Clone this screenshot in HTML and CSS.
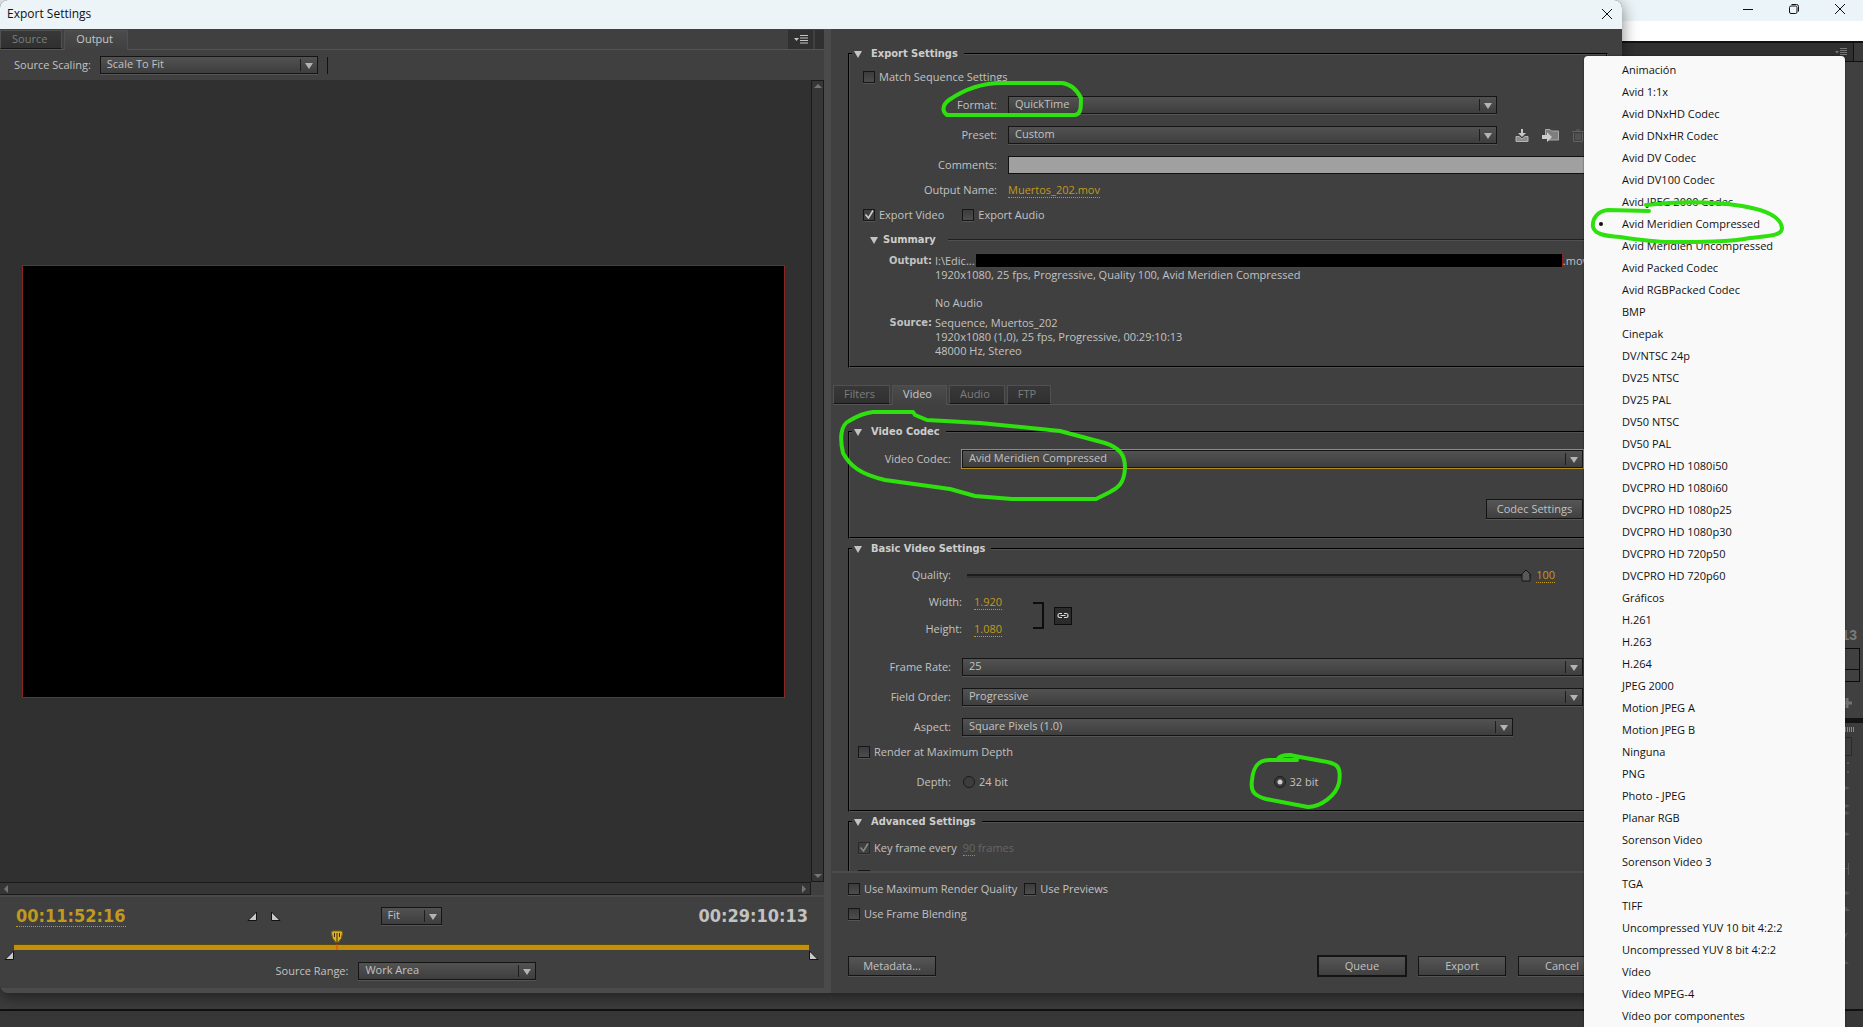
FILE: index.html
```
<!DOCTYPE html>
<html lang="en">
	<head>
	<meta charset="utf-8">
	<title>Export Settings</title>
	<link rel="stylesheet" href="styles.css">
	</head>
	<body>
		<div class="desktop">

			<!-- main application window, behind the dialog -->
			<div class="app">
				<div class="app_titlebar">
					<button class="win_button" aria-label="Minimize"><svg width="10" height="10" viewBox="0 0 10 10"><path d="M0 5.5H10"/></svg></button>
					<button class="win_button" aria-label="Restore"><svg width="10" height="10" viewBox="0 0 10 10"><rect x="0.5" y="2" width="7.5" height="7.5" rx="1.5"/><path d="M2.5 0.5H7.5Q9.5 0.5 9.5 2.5V7.5"/></svg></button>
					<button class="win_button" aria-label="Close"><svg width="10" height="10" viewBox="0 0 10 10"><path d="M0 0L10 10M10 0L0 10"/></svg></button>
				</div>
				<div class="app_menubar"></div>
				<div class="app_tabs">
					<svg width="12" height="8" viewBox="0 0 12 8"><path d="M0 3H4L2 5.5Z" fill="#777"/><path d="M5 .5H12M5 2.5H12M5 4.5H12M5 6.5H12" stroke="#777"/></svg>
					<span class="app_grip"></span>
				</div>
				<div class="app_program">
					<span class="app_time">13</span>
					<div class="app_ruler"></div>
					<svg class="app_plus" width="14" height="10" viewBox="0 0 14 10"><path d="M7 0V10M2 5H12" stroke="#727272" stroke-width="3"/></svg>
				</div>
				<div class="app_tools">
					<div class="app_dots"></div>
					<div class="app_tool"></div>
					<svg width="16" height="210" viewBox="0 0 16 210" fill="#585858"><path d="M8 4h2v2h-2zM12 2h2v2h-2zM8 9h2v2h-2zM12 11h2v2h-2zM8 25l7 3-7 3zM8 43l7 3-7 3zM8 50l7 3-7 3zM8 71l7 3-7 3zM8 108h5v-5h1v12h-1v-6H8zM8 130l7 3-7 3zM9 145l6 6H9zM13 172l-4 9v-6zM8 198l6 6H8z"/></svg>
				</div>
				<div class="app_bottom"></div>
			</div>

			<div class="dialog">
				<div class="dialog_title">
					<span>Export Settings</span>
					<button class="win_button" aria-label="Close"><svg width="10" height="10" viewBox="0 0 10 10"><path d="M0 0L10 10M10 0L0 10"/></svg></button>
				</div>

				<div class="dialog_body">
					<section class="preview">
						<div class="tabs preview_tabs">
							<button class="tab">Source</button>
							<button class="tab active">Output</button>
							<button class="panel_menu" aria-label="Panel menu"><svg width="14" height="9" viewBox="0 0 14 9"><path d="M0 3H5L2.500 6Z" fill="#c4c4c4"/><path d="M6 .5H14M6 3H14M6 5.500H14M6 8H14" stroke="#c4c4c4"/></svg></button>
							<span class="tab_stub"></span>
						</div>
						<div class="scaling">
							<label for="scaling">Source Scaling:</label>
							<span class="dropdown"><select id="scaling"><option>Scale To Fit</option></select></span>
							<span class="scaling_line"></span>
						</div>
						<div class="viewport">
							<div class="stage"><div class="frame"></div></div>
							<div class="vbar"><span class="arrow up"></span><span class="arrow down"></span></div>
						</div>
						<div class="hbar"><span class="arrow left"></span><span class="arrow right"></span></div>
						<div class="transport">
							<div class="transport_row">
								<button class="timecode">00:11:52:16</button>
								<button class="marker first" aria-label="Set In Point"><svg width="10" height="10" viewBox="0 0 10 10"><path d="M1 9.500H9.500V1Z"/></svg></button>
								<button class="marker" aria-label="Set Out Point"><svg width="10" height="10" viewBox="0 0 10 10"><path d="M.5 1V9.500H9Z"/></svg></button>
								<span class="dropdown fit"><select aria-label="Zoom"><option>Fit</option></select></span>
								<span class="duration">00:29:10:13</span>
							</div>
							<div class="timeline">
								<svg width="10" height="10" viewBox="0 0 10 10"><path d="M1 9.500H9.500V1Z"/></svg>
								<input type="range" class="playbar" min="0" max="1750" value="708" aria-label="Playhead">
								<svg width="10" height="10" viewBox="0 0 10 10"><path d="M.5 1V9.500H9Z"/></svg>
							</div>
							<div class="source_range">
								<label for="range">Source Range:</label>
								<span class="dropdown"><select id="range"><option>Work Area</option></select></span>
							</div>
						</div>
					</section>

					<section class="settings">
						<fieldset class="group export">
							<legend><span class="twirl"></span>Export Settings</legend>
							<div class="row"><label class="check"><input type="checkbox">Match Sequence Settings</label></div>
							<div class="row near">
								<label class="name" for="format">Format:</label>
								<span class="dropdown"><select id="format"><option>QuickTime</option></select></span>
								<span class="preset_icons"></span>
							</div>
							<div class="row">
								<label class="name" for="preset">Preset:</label>
								<span class="dropdown"><select id="preset"><option>Custom</option></select></span>
								<span class="preset_icons">
									<button aria-label="Save Preset"><svg width="14" height="13" viewBox="0 0 14 13"><path d="M1 7.500H4L7 10L10 7.500H13V12.500H1Z" fill="#8b8b8b" stroke="#b4b4b4"/><path d="M6 0H8V4H11L7 8L3 4H6Z" fill="#c6c6c6"/></svg></button>
									<button aria-label="Import Preset"><svg width="17" height="14" viewBox="0 0 17 14"><path d="M3.500 9V1.500H8L9.500 3H16.500V12H6" fill="#7e7e7e" stroke="#a8a8a8"/><path d="M0 7H5V4L10 9L5 14V11H0Z" fill="#cdcdcd"/></svg></button>
									<button aria-label="Delete Preset" disabled><svg width="12" height="13" viewBox="0 0 12 13"><path d="M0 2.500H12M4 1H8M1.500 4V12.500H10.500V4M4 4.500V11M6 4.500V11M8 4.500V11" fill="none" stroke="#626262"/></svg></button>
								</span>
							</div>
							<div class="row">
								<label class="name" for="comments">Comments:</label>
								<input type="text" id="comments">
							</div>
							<div class="row tight">
								<span class="name">Output Name:</span>
								<a class="hot" href="#">Muertos_202.mov</a>
							</div>
							<div class="row tight">
								<label class="check"><input type="checkbox" checked>Export Video</label>
								<label class="check second"><input type="checkbox">Export Audio</label>
							</div>
							<div class="summary_head"><span class="twirl"></span><h3>Summary</h3></div>
							<dl class="summary">
								<dt>Output:</dt>
								<dd><div class="path"><span>I:\Edic...</span><span class="path_hidden"></span><span>.mov</span></div>1920x1080, 25 fps, Progressive, Quality 100, Avid Meridien Compressed<br><br></dd>
								<dt></dt>
								<dd class="no_audio">No Audio</dd>
								<dt>Source:</dt>
								<dd>Sequence, Muertos_202<br>1920x1080 (1,0), 25 fps, Progressive, 00:29:10:13<br>48000 Hz, Stereo</dd>
							</dl>
						</fieldset>

						<div class="tabs">
							<button class="tab">Filters</button>
							<button class="tab active">Video</button>
							<button class="tab">Audio</button>
							<button class="tab">FTP</button>
						</div>
						<div class="tab_page">
							<fieldset class="group codec">
								<legend><span class="twirl"></span>Video Codec</legend>
								<div class="row">
									<label class="name" for="codec">Video Codec:</label>
									<span class="dropdown focused"><select id="codec"><option>Avid Meridien Compressed</option></select></span>
								</div>
								<button class="button codec_button">Codec Settings</button>
							</fieldset>

							<fieldset class="group basic">
								<legend><span class="twirl"></span>Basic Video Settings</legend>
								<div class="row quality">
									<label class="name" for="quality">Quality:</label>
									<input type="range" id="quality" min="0" max="100" value="100">
									<button class="hot">100</button>
								</div>
								<div class="size">
									<div>
										<div class="row"><span class="name">Width:</span><button class="hot">1.920</button></div>
										<div class="row"><span class="name">Height:</span><button class="hot">1.080</button></div>
									</div>
									<span class="bracket"></span>
									<button class="link" aria-label="Constrain proportions"><svg width="12" height="7" viewBox="0 0 12 7"><path d="M5 1.500H2.500Q1 1.500 1 3.500T2.500 5.500H5M7 1.500H9.500Q11 1.500 11 3.500T9.500 5.500H7M3.500 3.500H8.500" fill="none" stroke="#d8d8d8" stroke-width="1.200"/></svg></button>
								</div>
								<div class="row apart">
									<label class="name" for="rate">Frame Rate:</label>
									<span class="dropdown"><select id="rate"><option>25</option></select></span>
								</div>
								<div class="row">
									<label class="name" for="order">Field Order:</label>
									<span class="dropdown"><select id="order"><option>Progressive</option></select></span>
								</div>
								<div class="row aspect">
									<label class="name" for="aspect">Aspect:</label>
									<span class="dropdown"><select id="aspect"><option>Square Pixels (1.0)</option></select></span>
								</div>
								<div class="row tight"><label class="check"><input type="checkbox">Render at Maximum Depth</label></div>
								<div class="row depth">
									<span class="name">Depth:</span>
									<label class="check"><input type="radio" name="depth">24 bit</label>
									<label class="check"><input type="radio" name="depth" checked>32 bit</label>
								</div>
							</fieldset>

							<fieldset class="group advanced">
								<legend><span class="twirl"></span>Advanced Settings</legend>
								<div class="row">
									<label class="check"><input type="checkbox" checked disabled>Key frame every</label>
									<span class="disabled"><span class="hot">90</span> frames</span>
								</div>
								<div class="row near"><label class="check"><input type="checkbox">Optimize Stills</label></div>
							</fieldset>
						</div>

						<div class="footer">
							<div class="row">
								<label class="check"><input type="checkbox">Use Maximum Render Quality</label>
								<label class="check previews"><input type="checkbox">Use Previews</label>
							</div>
							<div class="row tight"><label class="check"><input type="checkbox">Use Frame Blending</label></div>
							<div class="buttons">
								<button class="button">Metadata...</button>
								<button class="button default">Queue</button>
								<button class="button">Export</button>
								<button class="button">Cancel</button>
							</div>
						</div>
					</section>
				</div>
			</div>

			<ul class="codec_menu" role="menu">
				<li role="menuitem">Animación</li>
				<li role="menuitem">Avid 1:1x</li>
				<li role="menuitem">Avid DNxHD Codec</li>
				<li role="menuitem">Avid DNxHR Codec</li>
				<li role="menuitem">Avid DV Codec</li>
				<li role="menuitem">Avid DV100 Codec</li>
				<li role="menuitem">Avid JPEG 2000 Codec</li>
				<li role="menuitem" class="selected">Avid Meridien Compressed</li>
				<li role="menuitem">Avid Meridien Uncompressed</li>
				<li role="menuitem">Avid Packed Codec</li>
				<li role="menuitem">Avid RGBPacked Codec</li>
				<li role="menuitem">BMP</li>
				<li role="menuitem">Cinepak</li>
				<li role="menuitem">DV/NTSC 24p</li>
				<li role="menuitem">DV25 NTSC</li>
				<li role="menuitem">DV25 PAL</li>
				<li role="menuitem">DV50 NTSC</li>
				<li role="menuitem">DV50 PAL</li>
				<li role="menuitem">DVCPRO HD 1080i50</li>
				<li role="menuitem">DVCPRO HD 1080i60</li>
				<li role="menuitem">DVCPRO HD 1080p25</li>
				<li role="menuitem">DVCPRO HD 1080p30</li>
				<li role="menuitem">DVCPRO HD 720p50</li>
				<li role="menuitem">DVCPRO HD 720p60</li>
				<li role="menuitem">Gráficos</li>
				<li role="menuitem">H.261</li>
				<li role="menuitem">H.263</li>
				<li role="menuitem">H.264</li>
				<li role="menuitem">JPEG 2000</li>
				<li role="menuitem">Motion JPEG A</li>
				<li role="menuitem">Motion JPEG B</li>
				<li role="menuitem">Ninguna</li>
				<li role="menuitem">PNG</li>
				<li role="menuitem">Photo - JPEG</li>
				<li role="menuitem">Planar RGB</li>
				<li role="menuitem">Sorenson Video</li>
				<li role="menuitem">Sorenson Video 3</li>
				<li role="menuitem">TGA</li>
				<li role="menuitem">TIFF</li>
				<li role="menuitem">Uncompressed YUV 10 bit 4:2:2</li>
				<li role="menuitem">Uncompressed YUV 8 bit 4:2:2</li>
				<li role="menuitem">Vídeo</li>
				<li role="menuitem">Vídeo MPEG-4</li>
				<li role="menuitem">Vídeo por componentes</li>
			</ul>

			<!-- hand drawn marks -->
			<svg class="marks">
				<path d="M1062 83H1002C980 83 962 91 949 100C942 105 942 112 947 115H1075C1081 114 1081 108 1081 98C1077 90 1070 84 1062 83Z"/>
				<path d="M1649 211L1608 210C1598 211 1592 218 1593 227C1595 234 1604 236 1620 237C1640 240 1655 242 1670 242C1700 242 1730 242 1750 238C1768 236 1782 236 1782 228C1781 217 1766 210 1742 206C1715 202 1680 201 1646 205"/>
				<path d="M873 412H913L915 415L927 420L980 423L1060 431L1105 443C1120 448 1125 455 1125 468C1124 485 1117 488 1110 492L1096 499H1012L975 496L950 489L885 480C860 474 850 466 843 453C840 440 840 425 849 421Q862 413 873 412Z"/>
				<path d="M1297 760H1269C1256 760 1253 770 1252 780C1250 793 1256 796 1266 799L1308 807C1320 807 1336 796 1339 783C1342 765 1336 763 1322 761L1300 757L1290 755Q1280 755 1278 759"/>
			</svg>
		</div>
	</body>
</html>
```
FILE: styles.css
```
	html, body {
		margin: 0px;
		width: 100%;
		height: 100%;
		overflow: hidden;
	}

	body, button, input, select {
		font-family: "Open Sans", "Noto Sans", sans-serif;
		font-size: 11px;
		line-height: 14px;
		color: #c2c2c2;
	}

	button, input, select {
		appearance: none;
		border: none;
		border-radius: 0;
		background: none;
		margin: 0;
		padding: 0;
		outline: none;
	}

	svg {
		display: block;
		flex: none;
	}

	.desktop {
		position: relative;
		height: 100%;
		overflow: hidden;
		background: #373737;
	}

	/* window behind */

	.app {
		height: 100%;
		display: flex;
		flex-direction: column;
	}

	.win_button {
		width: 46px;
		display: flex;
		align-items: center;
		justify-content: center;
	}

	.win_button svg {
		fill: none;
		stroke: #111;
	}

	.app_titlebar {
		height: 21px;
		background: #ebf4f8;
		display: flex;
		justify-content: flex-end;
		align-items: flex-start;
	}

	.app_titlebar .win_button {
		height: 17px;
	}

	.app_menubar {
		height: 20px;
		background: #fff;
		border-bottom: 2px solid #111;
	}

	.app_tabs {
		height: 18px;
		display: flex;
		align-items: center;
		justify-content: flex-end;
		gap: 6px;
		background: #303030;
		border-bottom: 1px solid #111;
	}

	.app_grip {
		width: 9px;
		height: 18px;
		border-left: 1px solid #111;
		background: #3a3a3a;
	}

	.app_program {
		flex: 1;
		display: flex;
		flex-direction: column;
		justify-content: flex-end;
		align-items: flex-end;
		background: #404040;
		padding-bottom: 10px;
	}

	.app_time {
		font-family: "Liberation Sans", sans-serif;
		font-size: 14px;
		font-weight: bold;
		color: #7a7a7a;
		padding-right: 6px;
	}

	.app_ruler {
		width: 60px;
		height: 32px;
		margin: 6px 3px 16px 0;
		border: 1px solid #0c0c0c;
		background: linear-gradient(#0c0c0c, #0c0c0c) 0 20px / 100% 1px no-repeat;
	}

	.app_plus {
		margin-right: 9px;
	}

	.app_tools {
		height: 286px;
		display: flex;
		flex-direction: column;
		align-items: flex-end;
		background: #3d3d3d;
		border-top: 5px solid #141414;
	}

	.app_tools svg {
		margin-right: 12px;
	}

	.app_dots {
		width: 20px;
		height: 5px;
		margin: 4px 8px 0 0;
		background: repeating-linear-gradient(90deg, #888 0px, #888 1px, transparent 1px, transparent 2px);
	}

	.app_tool {
		width: 24px;
		height: 17px;
		margin: 5px 11px 4px 0;
		border: 1px solid #2b2b2b;
	}

	.app_bottom {
		height: 16px;
		border-top: 2px solid #111;
		background: #373737;
	}

	/* export dialog */

	.dialog {
		position: absolute;
		left: 0;
		top: 0;
		right: 241px;
		bottom: 34px;
		display: flex;
		flex-direction: column;
		background: #404040;
		border-radius: 8px;
		box-shadow: 0 4px 16px rgba(0,0,0,.5);
		overflow: hidden;
	}

	.dialog_title {
		height: 28px;
		flex: none;
		display: flex;
		justify-content: space-between;
		align-items: center;
		padding: 0 0 1px 7px;
		background: #ecf4f8;
		color: #111;
		font-size: 12px;
	}

	.dialog_title .win_button {
		width: 30px;
		height: 26px;
	}

	.dialog_body {
		flex: 1;
		min-height: 0;
		display: flex;
	}

	.preview {
		flex: 824;
		min-width: 0;
		display: flex;
		flex-direction: column;
	}

	.settings {
		flex: 774;
		min-width: 0;
		display: flex;
		flex-direction: column;
		padding: 18px 0 0 17px;
		border-left: 7px solid #4b4b4b;
	}

	.tabs {
		display: flex;
		align-items: stretch;
		gap: 2px;
		height: 19px;
		flex: none;
		border-bottom: 1px solid #545454;
	}

	.tab {
		padding: 0 14px 1px 10px;
		background: linear-gradient(#383838, #303030);
		border: 1px solid #505050;
		border-bottom: 1px solid #151515;
		color: #7d7d7d;
	}

	.tab.active {
		background: linear-gradient(#4b4b4b, #404040);
		border-bottom: none;
		color: #c8c8c8;
		margin-bottom: -1px;
		padding-bottom: 3px;
	}

	.preview_tabs {
		margin-top: 1px;
	}

	.preview_tabs .tab {
		padding-left: 11px;
	}

	.panel_menu {
		width: 25px;
		margin-left: auto;
		display: flex;
		align-items: center;
		justify-content: center;
		background: #303030;
	}

	.tab_stub {
		width: 9px;
		background: #303030;
	}

	.scaling {
		height: 30px;
		flex: none;
		display: flex;
		align-items: center;
		padding-left: 14px;
		gap: 9px;
	}

	.scaling .dropdown {
		flex: 0 1 218px;
	}

	.scaling_line {
		width: 1px;
		height: 17px;
		background: #111;
	}

	.viewport {
		flex: 1;
		min-height: 0;
		display: flex;
		background: #303030;
	}

	.stage {
		flex: 1;
		display: flex;
		align-items: center;
		padding: 0 26px 0 22px;
	}

	.frame {
		flex: 1;
		aspect-ratio: 763 / 433;
		box-sizing: border-box;
		background: #000;
		border: 1px solid #8a2522;
	}

	.vbar {
		width: 11px;
		border: 1px solid #1a1a1a;
		background: #363636;
		display: flex;
		flex-direction: column;
		justify-content: space-between;
		align-items: center;
		padding: 3px 0;
	}

	.hbar {
		height: 11px;
		flex: none;
		display: flex;
		justify-content: space-between;
		align-items: center;
		margin-right: 13px;
		padding: 0 4px;
		border: 1px solid #1a1a1a;
		border-left: none;
		background: #363636;
	}

	.arrow {
		border: 4px solid transparent;
	}

	.arrow.up {
		border-top: none;
		border-bottom-color: #747474;
	}

	.arrow.down {
		border-bottom: none;
		border-top-color: #747474;
	}

	.arrow.left {
		border-left: none;
		border-right-color: #747474;
	}

	.arrow.right {
		border-right: none;
		border-left-color: #747474;
	}

	/* select box with its arrow cell */

	.dropdown {
		position: relative;
		display: flex;
		height: 18px;
	}

	.dropdown select {
		width: 100%;
		height: 100%;
		box-sizing: border-box;
		padding: 0 22px 2px 6px;
		border: 1px solid #151515;
		background: linear-gradient(#525252, #3e3e3e);
		box-shadow: 0 1px 0 #555;
	}

	.dropdown::before {
		content: "";
		position: absolute;
		right: 17px;
		top: 3px;
		bottom: 3px;
		border-left: 1px solid #1d1d1d;
	}

	.dropdown::after {
		content: "";
		position: absolute;
		right: 5px;
		top: 7px;
		border: 4px solid transparent;
		border-top: 6px solid #b4b4b4;
		border-bottom: none;
	}

	.dropdown.focused select {
		outline: 1px solid #b08c22;
	}

	.transport {
		flex: none;
		height: 91px;
		display: flex;
		flex-direction: column;
		border-top: 2px solid #4a4a4a;
		border-bottom: 5px solid #4b4b4b;
	}

	.transport_row {
		display: flex;
		align-items: center;
		height: 18px;
		padding: 10px 16px 0;
	}

	.timecode, .duration {
		font-family: "DejaVu Sans Condensed", "DejaVu Sans", sans-serif;
		font-size: 18px;
		font-weight: bold;
		line-height: 20px;
	}

	.timecode {
		color: #c19a1d;
		border-bottom: 1px dotted #c19a1d;
	}

	.duration {
		margin-left: auto;
	}

	.marker {
		margin-left: 14px;
	}

	.marker.first {
		margin-left: 121px;
	}

	.marker svg, .timeline svg {
		fill: #c8c8c8;
		stroke: #111;
	}

	.fit {
		width: 61px;
		margin-left: 100px;
	}

	.timeline {
		display: flex;
		align-items: flex-end;
		margin: 5px 5px 0 4px;
	}

	.timeline svg {
		margin-bottom: -10px;
	}

	.playbar {
		flex: 1;
		min-width: 0;
		height: 20px;
		background: linear-gradient(#584813 1px, #c29109 1px) 0 100% / 100% 6px no-repeat;
	}

	.playbar::-webkit-slider-thumb {
		appearance: none;
		width: 12px;
		height: 20px;
		background: url("data:image/svg+xml,%3Csvg xmlns='http://www.w3.org/2000/svg' width='12' height='20'%3E%3Cpath d='M2 1H10Q11.500 1 11.500 3Q11.500 9 6 13.500Q.5 9 .5 3Q.5 1 2 1Z' fill='%23dcb12a' stroke='%237d6110'/%3E%3Cpath d='M3.500 3V7M8.500 3V7M6 3V14' stroke='%23372b08'/%3E%3Cpath d='M6 14V20' stroke='%23e23b1c'/%3E%3C/svg%3E") no-repeat;
	}

	.source_range {
		display: flex;
		align-items: center;
		justify-content: center;
		gap: 10px;
		margin: 12px 12px 0 0;
	}

	.source_range .dropdown {
		width: 178px;
	}

	/* grouped settings */

	.group {
		margin: 0 14px 0 0;
		min-width: 0;
		padding: 0 0 8px;
		border: 2px groove #515151;
	}

	.group legend {
		display: flex;
		align-items: center;
		height: 14px;
		margin-left: 2px;
		padding: 0 6px 0 2px;
		font-family: "DejaVu Sans Condensed", "DejaVu Sans", sans-serif;
		font-weight: bold;
		color: #cdcdcd;
	}

	.twirl {
		border: 4px solid transparent;
		border-top: 7px solid #c4c4c4;
		border-bottom: none;
		margin-right: 9px;
	}

	.row {
		display: flex;
		align-items: center;
		height: 18px;
		margin-top: 12px;
	}

	.group legend + .row {
		margin-top: 0;
	}

	.row.near {
		margin-top: 10px;
	}

	.row.tight {
		margin-top: 7px;
	}

	.row.apart {
		margin-top: 20px;
	}

	.row .dropdown {
		flex: 1;
	}

	.name {
		width: 101px;
		margin-right: 11px;
		text-align: right;
		white-space: nowrap;
	}

	.check {
		display: flex;
		align-items: center;
		gap: 4px;
		white-space: nowrap;
	}

	input[type="checkbox"] {
		width: 12px;
		height: 12px;
		background: linear-gradient(#3c3c3c, #4d4d4d);
		border: 1px solid #161616;
		box-sizing: border-box;
		box-shadow: 0 1px 0 #555;
	}

	input[type="checkbox"]:checked {
		background: url("data:image/svg+xml,%3Csvg xmlns='http://www.w3.org/2000/svg' width='10' height='10'%3E%3Cpath d='M1.500 4.500L4.500 8L9 .5' fill='none' stroke='%23d0d0d0' stroke-width='1.600'/%3E%3C/svg%3E") no-repeat;
	}

	input[type="checkbox"]:disabled {
		opacity: .5;
	}

	input[type="radio"] {
		width: 12px;
		height: 12px;
		box-sizing: border-box;
		border: 1px solid #1b1b1b;
		border-radius: 50%;
		background: #3d3d3d;
	}

	input[type="radio"]:checked {
		background: radial-gradient(#d0d0d0 0, #d0d0d0 2px, #3a3a3a 3px);
	}

	input[type="text"] {
		flex: 1;
		height: 18px;
		box-sizing: border-box;
		border: 1px solid #111;
		background: #a0a0a0;
		color: #111;
	}

	.hot {
		color: #c19a1d;
		text-decoration: none;
		border-bottom: 1px dotted #c19a1d;
	}

	.export {
		padding-top: 7px;
	}

	.export .row {
		padding-left: 13px;
	}

	.export .name {
		width: 134px;
	}

	.preset_icons {
		width: 109px;
		display: flex;
		align-items: center;
		gap: 13px;
		padding-left: 18px;
		box-sizing: border-box;
	}

	.check.second {
		margin-left: 18px;
	}

	.summary_head {
		display: flex;
		align-items: center;
		height: 18px;
		margin-top: 7px;
		padding-left: 20px;
	}

	.summary_head h3 {
		margin: 0;
		font-family: "DejaVu Sans Condensed", "DejaVu Sans", sans-serif;
		font-size: 11px;
		color: #cdcdcd;
	}

	.summary_head .twirl {
		margin-right: 5px;
	}

	.summary_head::after {
		content: "";
		flex: 1;
		margin-left: 12px;
		border-top: 1px solid #202020;
		border-bottom: 1px solid #515151;
	}

	.summary {
		display: grid;
		grid-template-columns: 82px 1fr;
		column-gap: 3px;
		margin: 5px 0 0;
	}

	.summary dt {
		text-align: right;
		font-family: "DejaVu Sans Condensed", "DejaVu Sans", sans-serif;
		font-weight: bold;
	}

	.summary dd {
		margin: 0;
	}

	.no_audio {
		padding-bottom: 6px;
	}

	.path {
		display: flex;
		height: 14px;
		padding-right: 18px;
	}

	.path_hidden {
		flex: 1;
		height: 13px;
		margin-top: -1px;
		background: #000;
		border: 1px solid #8a2522;
	}

	.settings > .tabs {
		margin: 17px 0 0 -15px;
	}

	.tab_page {
		flex: 1;
		min-height: 0;
		overflow: hidden;
		padding-top: 20px;
	}

	.tab_page .group {
		margin: 0 32px 3px 0;
		padding-right: 5px;
	}

	.codec {
		padding-top: 11px;
	}

	.tab_page .codec {
		padding-bottom: 18px;
	}

	.button {
		width: 88px;
		height: 20px;
		padding: 0 0 1px;
		border: 1px solid #141414;
		background: linear-gradient(#565656, #404040);
		box-shadow: 0 1px 0 #555;
	}

	.button.default {
		outline: 1px solid #141414;
	}

	.codec_button {
		display: block;
		margin: 31px 0 0 auto;
		width: 97px;
	}

	.basic, .advanced {
		padding-top: 10px;
		padding-bottom: 19px;
	}

	.tab_page .row > .check:first-child {
		margin-left: 8px;
	}

	.quality {
		padding-right: 28px;
	}

	#quality {
		flex: 1;
		height: 14px;
		margin: 0 5px;
		background: linear-gradient(#1c1c1c 2px, #333 2px) 0 6px / 100% 4px no-repeat;
	}

	#quality::-webkit-slider-thumb {
		appearance: none;
		width: 10px;
		height: 13px;
		background: url("data:image/svg+xml,%3Csvg xmlns='http://www.w3.org/2000/svg' width='10' height='13'%3E%3Cpath d='M1 12V5L5 1L9 5V12Z' fill='%23585858' stroke='%23151515'/%3E%3C/svg%3E") no-repeat;
	}

	.size {
		display: flex;
		align-items: center;
		margin-top: 9px;
	}

	.size .row {
		margin-top: 0;
	}

	.size .row + .row {
		margin-top: 9px;
	}

	.size .name {
		width: 112px;
		margin-right: 12px;
	}

	.bracket {
		width: 9px;
		height: 23px;
		margin: 0 10px 0 31px;
		border: 2px solid #0d0d0d;
		border-left: none;
	}

	.link {
		width: 18px;
		height: 18px;
		display: flex;
		align-items: center;
		justify-content: center;
		border: 1px solid #0d0d0d;
		background: #2b2b2b;
		box-sizing: border-box;
	}

	.aspect {
		padding-right: 70px;
	}

	.depth .check {
		flex: 1;
	}

	.depth input {
		margin-left: 1px;
	}

	.advanced .disabled {
		margin-left: 6px;
		color: #666;
	}

	.advanced .hot {
		color: #666;
		border-color: #888;
	}

	.footer {
		flex: none;
		margin-left: -16px;
		padding: 7px 16px 17px;
		border-top: 2px solid #4b4b4b;
	}

	.footer .row:first-child {
		margin-top: 0;
	}

	.previews {
		margin-left: 7px;
	}

	.buttons {
		display: flex;
		gap: 12px;
		margin-top: 33px;
	}

	.buttons .button:first-child {
		margin-right: auto;
	}

	/* popup list of codecs */

	.codec_menu {
		position: absolute;
		top: 56px;
		right: 18px;
		width: 261px;
		box-sizing: border-box;
		margin: 0;
		padding: 3px 0;
		list-style: none;
		border-radius: 4px;
		background: #f9f9f9;
		color: #111;
		box-shadow: 0 0 2px rgba(0,0,0,.6);
	}

	.codec_menu li {
		height: 22px;
		line-height: 22px;
		padding-left: 38px;
		white-space: nowrap;
	}

	.codec_menu .selected {
		position: relative;
	}

	.codec_menu .selected::before {
		content: "";
		position: absolute;
		left: 15px;
		top: 9px;
		width: 4px;
		height: 4px;
		border-radius: 50%;
		background: #111;
	}

	.marks {
		position: absolute;
		left: 0;
		top: 0;
		width: 100%;
		height: 100%;
		pointer-events: none;
		fill: none;
		stroke: #2fe00f;
		stroke-width: 4;
		stroke-linecap: round;
		stroke-linejoin: round;
	}
```
